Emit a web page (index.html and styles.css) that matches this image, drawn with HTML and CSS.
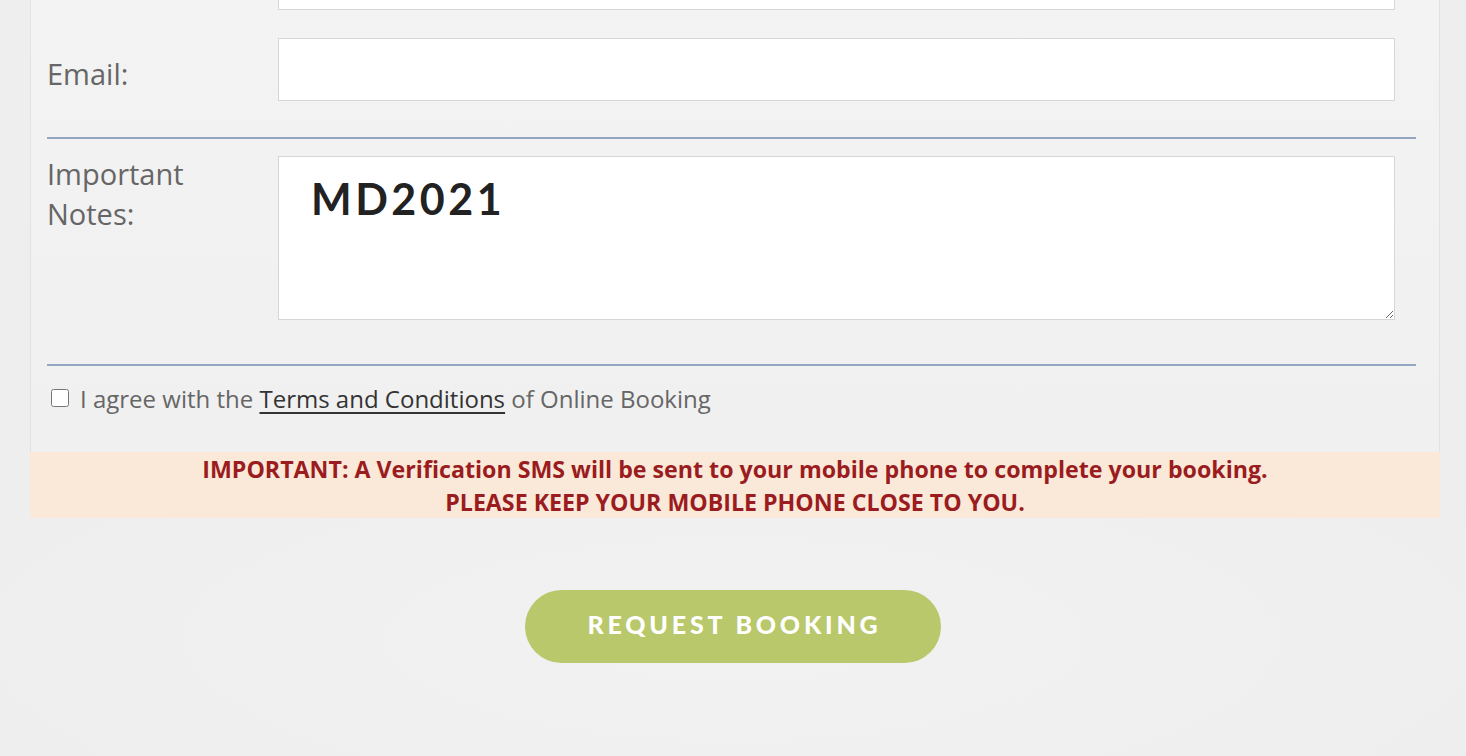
FILE: index.html
```html
<!DOCTYPE html>
<html lang="en">
<head>
<meta charset="utf-8">
<title>Booking form</title>
<link rel="stylesheet" href="styles.css">
</head>
<body>
<div class="page">
  <form class="panel">
    <div class="row row-stub">
      <div class="label"></div>
      <div class="input-stub"></div>
    </div>
    <div class="row row-email">
      <label class="label label-email" for="email">Email:</label>
      <input class="input" id="email" type="text">
    </div>
    <hr class="divider divider-1">
    <div class="row row-notes">
      <label class="label label-notes" for="notes">Important<br>Notes:</label>
      <textarea class="textarea" id="notes">MD2021</textarea>
    </div>
    <hr class="divider divider-2">
    <div class="agree">
      <input class="check" type="checkbox" id="agree">
      <label for="agree" class="agree-text">I agree with the <a href="#" class="terms">Terms and Conditions</a> of Online Booking</label>
    </div>
  </form>
  <div class="notice">
    <p>IMPORTANT: A Verification SMS will be sent to your mobile phone to complete your booking.</p>
    <p>PLEASE KEEP YOUR MOBILE PHONE CLOSE TO YOU.</p>
  </div>
  <div class="actions">
    <button class="btn" type="button">REQUEST BOOKING</button>
  </div>
</div>
</body>
</html>
```

FILE: styles.css
```css
html, body {
  margin: 0;
  padding: 0;
}
body {
  background: radial-gradient(ellipse 900px 260px at 50% 640px, #f2f2f2 0%, #eeeeee 100%);
  background-color: #efefef;
  font-family: "Open Sans", "Liberation Sans", sans-serif;
  min-height: 756px;
  overflow: hidden;
}
.page {
  width: 1410px;
  margin-left: 30px;
}
.panel {
  background: linear-gradient(#f3f3f3, #f0f0f0);
  border-left: 1px solid #e2e2e2;
  border-right: 1px solid #e2e2e2;
  padding: 0 23px 37px 16px;
}
.row {
  display: grid;
  grid-template-columns: 231px 1fr;
  align-items: start;
  padding-right: 21px;
}
.row-stub {
  height: 10px;
}
.input-stub {
  height: 9px;
  background: #fff;
  border: 1px solid #d6d6d6;
  border-top: none;
}
.row-email {
  margin-top: 28px;
}
.label {
  font-size: 29px;
  line-height: 40px;
  color: #666;
}
.label-email {
  margin-top: 16px;
}
.label-notes {
  margin-top: -2px;
}
.input, .textarea {
  display: block;
  box-sizing: border-box;
  width: 100%;
  margin: 0;
  background: #fff;
  border: 1px solid #d6d6d6;
  border-radius: 0;
  outline: none;
}
.input {
  height: 63px;
}
.textarea {
  height: 164px;
  resize: vertical;
  padding: 16px 32px;
  font-family: Lato, "Open Sans", sans-serif;
  font-weight: 700;
  font-size: 43px;
  letter-spacing: 3.5px;
  line-height: 52px;
  color: #222;
}
.divider {
  border: none;
  height: 2px;
  background: #93a6c2;
  margin: 0;
}
.divider-1 {
  margin-top: 36px;
  margin-bottom: 17px;
}
.divider-2 {
  margin-top: 44px;
}
.agree {
  display: flex;
  align-items: center;
  margin-top: 15px;
  height: 34px;
}
.check {
  width: 18px;
  height: 18px;
  margin: 0 11px 0 4px;
}
.agree-text {
  font-size: 24px;
  color: #666;
}
.terms {
  color: #333;
  text-decoration: underline;
  text-underline-offset: 4px;
  text-decoration-thickness: 2px;
}
.notice {
  background: #fae9d8;
  height: 66px;
  box-sizing: border-box;
  padding-top: 1px;
  text-align: center;
  color: #9b1c20;
  font-weight: 700;
  font-size: 23.2px;
  line-height: 33px;
}
.notice p {
  margin: 0;
}
.actions {
  display: flex;
  justify-content: center;
  margin-left: -30px;
  width: 1466px;
  padding-top: 72px;
}
.btn {
  width: 416px;
  height: 73px;
  border: none;
  border-radius: 37px;
  background: #b8c86b;
  color: #fff;
  font-family: Lato, "Open Sans", sans-serif;
  font-weight: 900;
  font-size: 25px;
  letter-spacing: 3.8px;
  padding: 0 0 5px 3px;
  cursor: pointer;
}
```
